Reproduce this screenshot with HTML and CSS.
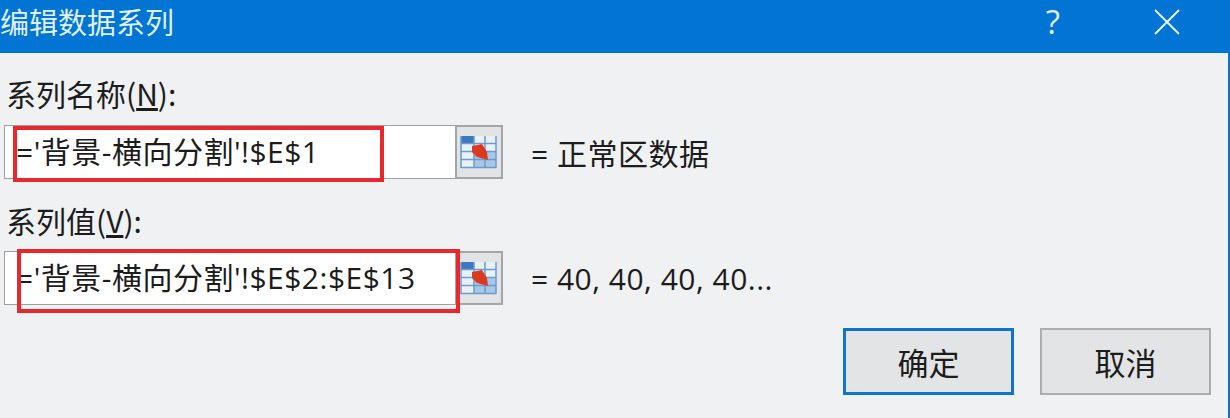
FILE: index.html
```html
<!DOCTYPE html>
<html lang="zh-CN">
<head>
    <meta charset="UTF-8">
    <title>编辑数据系列</title>
    <link rel="stylesheet" href="styles.css">
</head>
<body>
    <div class="dialog">
        <div class="title-bar">
            <div class="title-text">编辑数据系列</div>
            <div class="help-btn">?</div>
            <svg class="close-btn" width="26" height="26" viewBox="0 0 26 26">
                <path d="M1 1L25 25M25 1L1 25" stroke="#e6f3fc" stroke-width="2" fill="none"/>
            </svg>
        </div>
        <div class="dialog-body">
            <div class="field field-name">
                <div class="field-label">系列名称(<u>N</u>):</div>
                <div class="field-row">
                    <div class="input-box">='背景-横向分割'!$E$1</div>
                    <div class="range-btn">
                        <svg width="38" height="34" viewBox="0 0 38 34">
                            <rect x="1" y="1" width="35" height="32" fill="#e8f0f8"/>
                            <rect x="1" y="1" width="13" height="7" fill="#3b78bd"/>
                            <rect x="14" y="17" width="22" height="16" fill="#a9c8e8"/>
                            <path d="M1 8.500H36M1 16.500H36M1 24.500H36M1 32.500H36M1 1V33M14 1V33M25 1V33M36 1V33" stroke="#6b9bcf" stroke-width="1.500" fill="none"/>
                            <path d="M12 11L22 9L27 17L28 25L17 22L12 17Z" fill="#dc3a20"/>
                        </svg>
                    </div>
                    <div class="field-value">= 正常区数据</div>
                    <div class="red-box red-box-name"></div>
                </div>
            </div>
            <div class="field field-values">
                <div class="field-label">系列值(<u>V</u>):</div>
                <div class="field-row">
                    <div class="input-box">='背景-横向分割'!$E$2:$E$13</div>
                    <div class="range-btn">
                        <svg width="38" height="34" viewBox="0 0 38 34">
                            <rect x="1" y="1" width="35" height="32" fill="#e8f0f8"/>
                            <rect x="1" y="1" width="13" height="7" fill="#3b78bd"/>
                            <rect x="14" y="17" width="22" height="16" fill="#a9c8e8"/>
                            <path d="M1 8.500H36M1 16.500H36M1 24.500H36M1 32.500H36M1 1V33M14 1V33M25 1V33M36 1V33" stroke="#6b9bcf" stroke-width="1.500" fill="none"/>
                            <path d="M12 11L22 9L27 17L28 25L17 22L12 17Z" fill="#dc3a20"/>
                        </svg>
                    </div>
                    <div class="field-value">= 40, 40, 40, 40...</div>
                    <div class="red-box red-box-values"></div>
                </div>
            </div>
            <div class="button-row">
                <div class="btn btn-default">确定</div>
                <div class="btn">取消</div>
            </div>
        </div>
    </div>
</body>
</html>
```

FILE: styles.css
```css
html, body {
    margin: 0;
    padding: 0;
}

body {
    width: 1230px;
    height: 418px;
    overflow: hidden;
    background-color: #eff1f3;
    font-family: "Open Sans", "Noto Sans CJK SC", sans-serif;
    color: #1c1c1c;
}

.dialog {
    display: flex;
    flex-direction: column;
    height: 418px;
    box-sizing: border-box;
    border-right: 2px solid #0a72cf;
}

.title-bar {
    height: 53px;
    flex: none;
    display: flex;
    align-items: center;
    background-color: #0274d3;
    color: #dff0fb;
}

.title-text {
    flex: 1;
    margin-bottom: 10px;
    font-size: 29px;
    font-family: "Noto Sans CJK SC", sans-serif;
    line-height: 43px;
}

.help-btn {
    font-size: 33px;
    line-height: 46px;
    margin-right: 94px;
    margin-bottom: 9px;
}

.close-btn {
    margin-right: 48px;
    margin-bottom: 9px;
}

.dialog-body {
    flex: 1;
    padding: 20px 0 0 4px;
}

.field-label {
    margin-left: 2px;
    height: 40px;
    font-size: 30px;
    line-height: 40px;
    font-family: "Noto Sans CJK SC", sans-serif;
}

.field-name .field-label {
    margin-bottom: 12px;
}

.field-values {
    margin-top: 21px;
}

.field-values .field-label {
    margin-bottom: 11px;
}

.field-row {
    position: relative;
    display: flex;
    align-items: center;
    height: 54px;
}

.input-box {
    box-sizing: border-box;
    width: 451px;
    height: 54px;
    padding-left: 11px;
    background-color: #fff;
    border: 1px solid #a0a0a0;
    border-right: 0;
    font-size: 30px;
    letter-spacing: 0.5px;
    line-height: 52px;
    white-space: nowrap;
    overflow: hidden;
}

.range-btn {
    box-sizing: border-box;
    width: 48px;
    height: 54px;
    display: flex;
    align-items: center;
    justify-content: center;
    background-color: #e2e3e4;
    border: 2px solid #a3a5a7;
}

.field-value {
    margin-left: 28px;
    font-size: 30px;
    letter-spacing: 0.5px;
    white-space: nowrap;
}

.red-box {
    position: absolute;
    box-sizing: border-box;
    border: 4px solid #e8282c;
}

.red-box-name {
    left: 9px;
    top: 1px;
    width: 371px;
    height: 56px;
}

.red-box-values {
    left: 13px;
    top: -2px;
    width: 443px;
    height: 64px;
}

.button-row {
    display: flex;
    gap: 26px;
    margin-top: 23px;
    margin-left: 839px;
}

.btn {
    box-sizing: border-box;
    width: 171px;
    height: 67px;
    display: flex;
    align-items: center;
    justify-content: center;
    background-color: #e3e4e5;
    border: 2px solid #adadad;
    font-size: 31px;
    font-family: "Noto Sans CJK SC", sans-serif;
}

.btn-default {
    border: 3px solid #0f74cf;
}
```
